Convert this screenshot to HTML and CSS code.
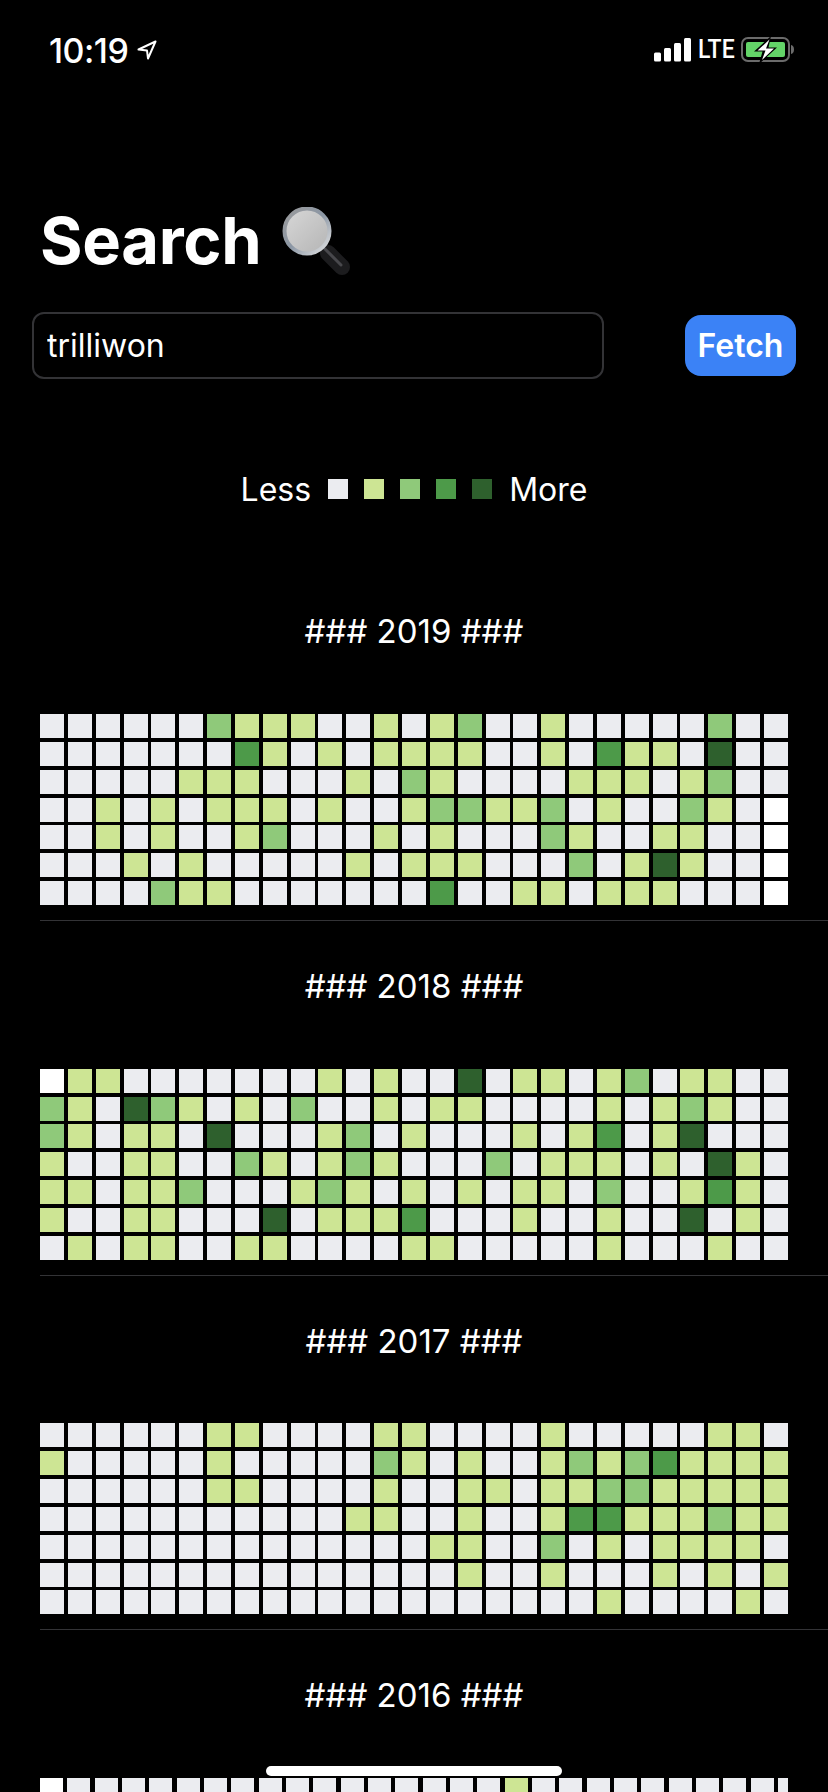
FILE: index.html
```html
<html>
	<head>
		<title>Search</title>
		<meta name="viewport" content="width=device-width, initial-scale=1">
		<link rel="stylesheet" href="styles.css">
		<script>
		// 0-4 = contribution level, w = day outside the year
		var years = {
			grid2019: [
				"00000021110010" + "1200100000200",
				"00000003101011" + "1100103110400",
				"00000111000102" + "1000011101200",
				"00101011101001" + "221120100210w",
				"00101001200010" + "100021001100w",
				"00010100000101" + "110002014100w",
				"00002110000000" + "300110111000w"
			],
			grid2018: [
				"w1100000001010" + "0401101201100",
				"21042101020010" + "1100001012100",
				"21011040001201" + "0001013014000",
				"10011002101210" + "0020111010410",
				"11011200012101" + "0101102001310",
				"10011000401113" + "0001001004010",
				"01011001100001" + "1000001000100"
			],
			grid2017: [
				"00000011000011" + "0000100000110",
				"10000010000021" + "0100121231111",
				"00000011000010" + "0110112211111",
				"00000000000110" + "0100133111211",
				"00000000000000" + "1100201011110",
				"00000000000000" + "0100100010101",
				"00000000000000" + "0000001000010"
			],
			grid2016: [
				"w000000000000000" + "010000000000"
			]
		};
		window.onload = function() {
			for (var id in years) {
				var grid = document.getElementById(id);
				var days = years[id].join("");
				for (var i = 0; i < days.length; i++) {
					var cell = document.createElement("div");
					cell.className = "cell level" + days[i];
					grid.appendChild(cell);
				}
			}
		}
		</script>
	</head>
	<body>
		<div class="status">
			<div class="status_left">
				<span class="time">10:19</span>
				<svg class="arrow" width="20" height="20" viewBox="0 0 20 20"><path d="M18.5 1.5 L1.5 9.5 L10 10.5 L11 18.5 Z" fill="none" stroke="#fff" stroke-width="2" stroke-linejoin="round"/></svg>
			</div>
			<div class="status_right">
				<svg width="37" height="24" viewBox="0 0 37 24">
					<rect x="0" y="14.5" width="7" height="9" rx="1.5" fill="#fff"/>
					<rect x="10" y="10" width="7" height="13.500" rx="1.5" fill="#fff"/>
					<rect x="20" y="5" width="7" height="18.500" rx="1.5" fill="#fff"/>
					<rect x="30" y="0" width="7" height="23.500" rx="1.5" fill="#fff"/>
				</svg>
				<span class="lte">LTE</span>
				<svg width="54" height="26" viewBox="0 0 54 26">
					<rect x="1" y="1" width="47" height="23" rx="6" fill="none" stroke="#6b6b6b" stroke-width="2"/>
					<rect x="5" y="5" width="39" height="15" rx="2" fill="#63d468"/>
					<path d="M50 8 C52 8.500 53 10 53 12.500 C53 15 52 16.500 50 17 Z" fill="#6b6b6b"/>
					<path d="M30 -1 L13 14.500 L21.500 14.500 L18 27 L36 10.500 L27.500 10.500 Z" fill="#000"/>
					<path d="M28.500 2.500 L16.500 13.500 L24.500 13.500 L21 23 L33 11.500 L25 11.500 Z" fill="#fff"/>
				</svg>
			</div>
		</div>

		<div class="title">
			<h1>Search</h1>
			<svg class="glass" width="68" height="68" viewBox="0 0 68 68">
				<defs>
					<linearGradient id="lens" x1="0" y1="0" x2="1" y2="1">
						<stop offset="0" stop-color="#d8d8d8"/>
						<stop offset="1" stop-color="#b4b4b4"/>
					</linearGradient>
					<linearGradient id="ring" x1="0" y1="0" x2="1" y2="1">
						<stop offset="0" stop-color="#9a9a9a"/>
						<stop offset="0.5" stop-color="#8c97a5"/>
						<stop offset="1" stop-color="#e6e6e6"/>
					</linearGradient>
				</defs>
				<line x1="46" y1="46" x2="60" y2="60" stroke="#1c1c1e" stroke-width="16" stroke-linecap="round"/>
				<line x1="43" y1="42" x2="59" y2="58" stroke="#48484c" stroke-width="3" stroke-linecap="round"/>
				<circle cx="25" cy="24" r="22.500" fill="url(#lens)" stroke="url(#ring)" stroke-width="4"/>
			</svg>
		</div>

		<div class="search">
			<input class="field" type="text" value="trilliwon"/>
			<button class="fetch">Fetch</button>
		</div>

		<div class="legend">
			<span class="legend_less">Less</span>
			<div class="swatch level0"></div>
			<div class="swatch level1"></div>
			<div class="swatch level2"></div>
			<div class="swatch level3"></div>
			<div class="swatch level4"></div>
			<span class="legend_more">More</span>
		</div>

		<div class="year">
			<div class="year_title">### 2019 ###</div>
			<div class="grid" id="grid2019"></div>
		</div>
		<div class="year">
			<div class="year_title">### 2018 ###</div>
			<div class="grid" id="grid2018"></div>
		</div>
		<div class="year">
			<div class="year_title">### 2017 ###</div>
			<div class="grid" id="grid2017"></div>
		</div>
		<div class="year last">
			<div class="year_title">### 2016 ###</div>
			<div class="grid wide" id="grid2016"></div>
		</div>

		<div class="home"></div>
	</body>
</html>
```

FILE: styles.css
```css
* {
	font-family: Inter, "Liberation Sans", sans-serif;
	box-sizing: border-box;
}
html, body {
	margin: 0;
	height: 1792px;
	overflow: hidden;
}
body {
	background: black;
	color: white;
	position: relative;
}
.status {
	height: 100px;
	display: flex;
	justify-content: space-between;
	align-items: flex-start;
	padding: 31px 33px 0 49px;
}
.status_left {
	display: flex;
	align-items: center;
	gap: 9px;
	height: 38px;
}
.time {
	font-size: 34px;
	font-weight: 500;
	letter-spacing: -0.5px;
}
.status_right {
	display: flex;
	align-items: center;
	gap: 7px;
	padding-top: 6px;
}
.lte {
	font-family: Roboto, sans-serif;
	font-size: 25px;
	font-weight: 500;
	width: 36px;
	line-height: 24px;
	transform: scaleX(0.92);
	transform-origin: left center;
	white-space: nowrap;
}
.title {
	display: flex;
	align-items: center;
	gap: 21px;
	height: 76px;
	margin: 103px 0 0 40px;
}
h1 {
	margin: 0;
	font-size: 65px;
	font-weight: 700;
	letter-spacing: -0.3px;
	line-height: 76px;
}
.search {
	display: flex;
	align-items: center;
	justify-content: space-between;
	height: 67px;
	margin: 33px 32px 0 32px;
}
.field {
	width: 572px;
	height: 67px;
	background: black;
	border: 2px solid #333336;
	border-radius: 12px;
	color: white;
	font-size: 32px;
	padding: 0 13px;
	outline: none;
}
.fetch {
	width: 111px;
	height: 61px;
	background: #3b82f6;
	border: none;
	border-radius: 16px;
	color: white;
	font-size: 32px;
	font-weight: 600;
	padding: 0;
}
.legend {
	display: flex;
	align-items: center;
	justify-content: center;
	gap: 16px;
	height: 40px;
	margin: 90px 0 57.2px 0;
	font-size: 32px;
}
.legend_less {
	margin-right: 1px;
}
.legend_more {
	margin-left: 1px;
}
.swatch {
	width: 20px;
	height: 20px;
}
.year {
	margin-left: 40px;
	padding: 45px 0 14.85px 0;
	border-bottom: 1px solid #333336;
}
.year.last {
	border-bottom: none;
	padding-bottom: 0;
}
.year_title {
	height: 40px;
	line-height: 40px;
	margin: 0 0 62.8px -40px;
	text-align: center;
	font-size: 33px;
}
.grid {
	display: grid;
	grid-template-columns: repeat(27, 24px);
	grid-auto-rows: 24px;
	gap: 3.85px;
}
.grid.wide {
	grid-template-columns: repeat(27, 23px) 10px;
	column-gap: 4.33px;
}
.level0 { background: #ebecf0; }
.level1 { background: #cde594; }
.level2 { background: #8fc97a; }
.level3 { background: #4d9a49; }
.level4 { background: #2e602d; }
.levelw { background: #ffffff; }
.home {
	position: absolute;
	left: 266px;
	top: 1766px;
	width: 296px;
	height: 10px;
	background: white;
	border-radius: 5px;
}
```
